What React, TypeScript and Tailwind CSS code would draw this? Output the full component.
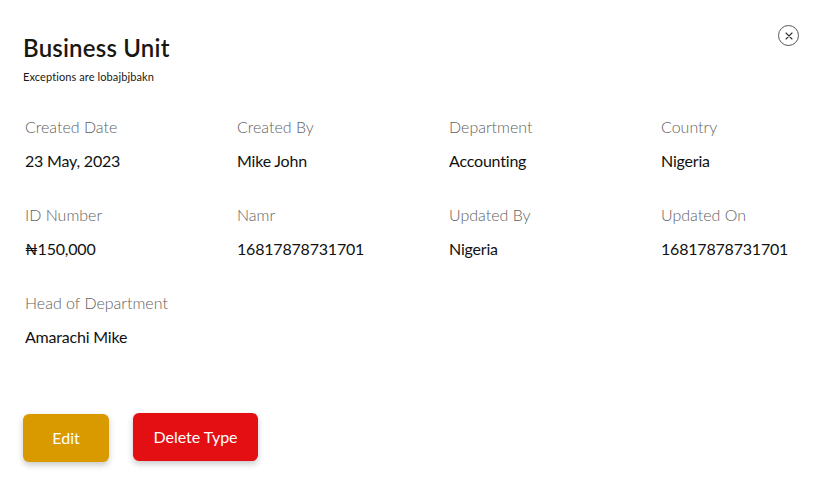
import React from "react";

const rows = [
  [
    ["Created Date", "23 May, 2023"],
    ["Created By", "Mike John"],
    ["Department", "Accounting"],
    ["Country", "Nigeria"],
  ],
  [
    ["ID Number", "₦150,000"],
    ["Namr", "16817878731701"],
    ["Updated By", "Nigeria"],
    ["Updated On", "16817878731701"],
  ],
  [["Head of Department", "Amarachi Mike"]],
];

export default function App() {
  return (
    <div
      className="w-[828px] h-[493px] bg-white relative overflow-hidden"
      style={{ fontFamily: "Lato, 'Noto Sans', sans-serif" }}
    >
      <button className="absolute left-[778px] top-[25px] w-[21px] h-[21px] rounded-full border border-[#555] flex items-center justify-center">
        <svg width="8" height="8" viewBox="0 0 8 8">
          <path d="M1 1L7 7M7 1L1 7" stroke="#333" strokeWidth="1.1" strokeLinecap="round" />
        </svg>
      </button>
      <div className="pl-[23px] pt-[34px]">
        <h1 className="text-[24px] leading-[28px] font-semibold text-[#1a1712] tracking-[0.2px]">Business Unit</h1>
        <p className="text-[11px] leading-[14px] mt-[8px] text-[#1a1712] tracking-[0.1px]">Exceptions are lobajbjbakn</p>
      </div>
      <div className="pl-[25px] pt-[33px] flex flex-col gap-[34px]">
        {rows.map((row, i) => (
          <div key={i} className="grid grid-cols-[212px_212px_212px_auto]">
            {row.map(([l, v]) => (
              <div key={l} className="flex flex-col">
                <span className="text-[16px] leading-[20px] font-light text-[#5f5f5f]">{l}</span>
                <span className="text-[16px] leading-[20px] mt-[14px] text-[#111] tracking-[-0.2px]">{v}</span>
              </div>
            ))}
          </div>
        ))}
      </div>
      <div className="absolute left-[23px] top-[413px] flex gap-[24px] items-start">
        <button className="w-[86px] h-[48px] mt-[1px] rounded-[6px] bg-[#d99a00] text-white text-[16px] shadow-[0_3px_6px_rgba(0,0,0,0.22)]">
          Edit
        </button>
        <button className="w-[125px] h-[48px] rounded-[6px] bg-[#e30f13] text-white text-[16px] shadow-[0_3px_6px_rgba(0,0,0,0.22)]">
          Delete Type
        </button>
      </div>
    </div>
  );
}
